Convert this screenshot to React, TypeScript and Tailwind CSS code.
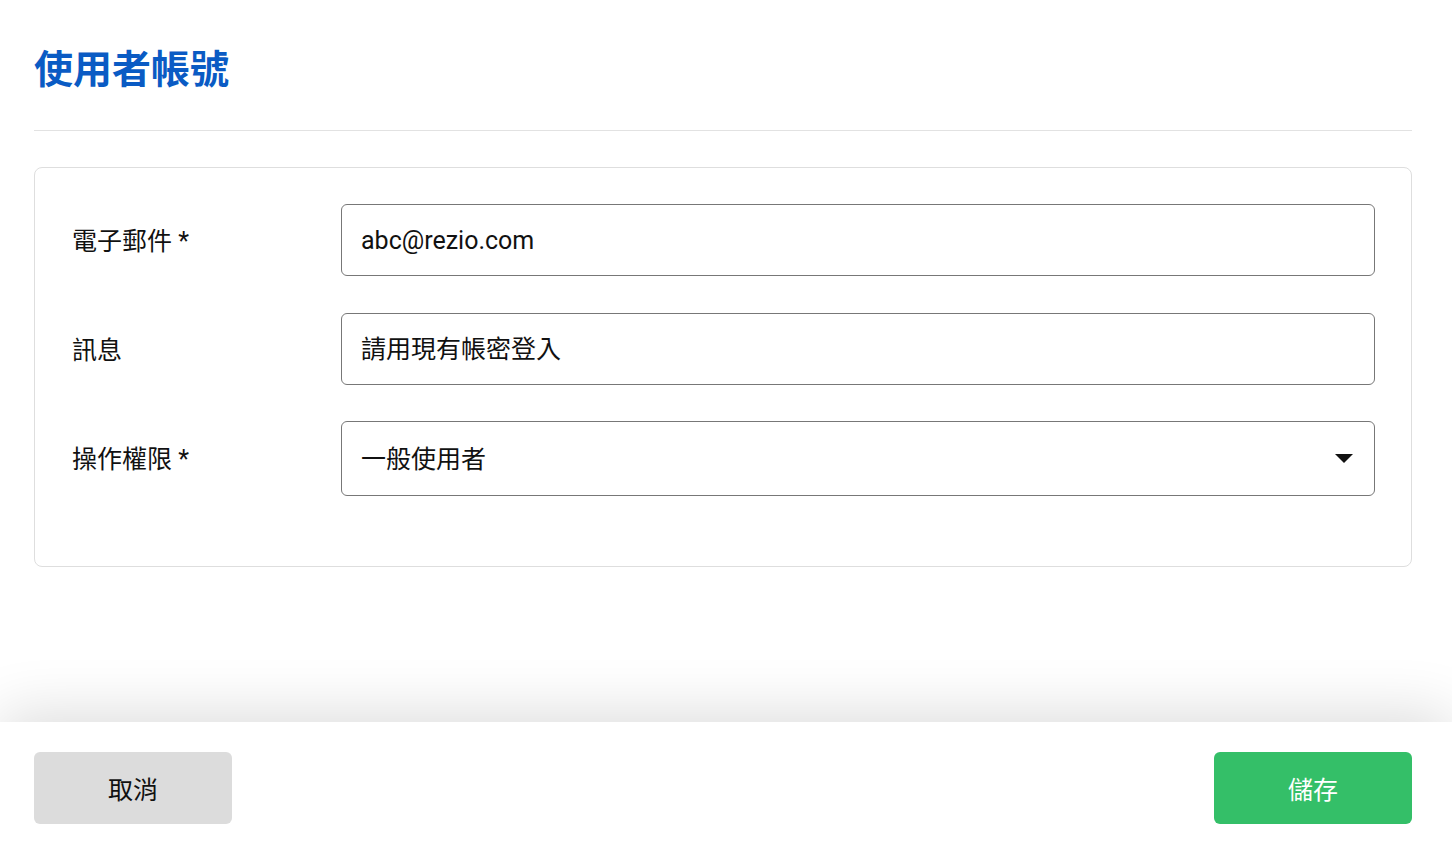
import React from 'react';

const FONT = 'font-[Roboto,"Noto_Sans_CJK_TC",sans-serif]';

interface FieldRowProps {
  label: string;
  required?: boolean;
  className?: string;
  children: React.ReactNode;
}

const FieldRow: React.FC<FieldRowProps> = ({ label, required, className = '', children }) => (
  <div className={`flex items-center ${className}`}>
    <div className="w-[269px] shrink-0 pt-[2px] text-[25px] leading-none text-[#111]">
      {label}
      {required && ' *'}
    </div>
    <div className="flex-1">{children}</div>
  </div>
);

const App: React.FC = () => {
  return (
    <div className={`${FONT} flex h-screen flex-col bg-white text-[#111]`}>
      <div className="flex-1 pl-[34px] pr-[40px]">
        <div className="flex h-[131px] items-start border-b border-[#e2e2e2] pt-[46px]">
          <h1 className="text-[39px] font-bold leading-[48px] text-[#0a5bc4]">使用者帳號</h1>
        </div>

        <div className="mt-[36px] rounded-lg border border-[#dedede] pb-[70px] pl-[37px] pr-[36px] pt-[36px]">
          <FieldRow label="電子郵件" required>
            <div className="flex h-[72px] items-center rounded-md border border-[#777] pl-[19px] pt-[2px] text-[25px]">
              abc@rezio.com
            </div>
          </FieldRow>
          <FieldRow label="訊息" className="mt-[37px]">
            <div className="flex h-[72px] items-center rounded-md border border-[#777] pl-[19px] pt-[2px] text-[25px]">
              請用現有帳密登入
            </div>
          </FieldRow>
          <FieldRow label="操作權限" required className="mt-[36px]">
            <div className="flex h-[75px] items-center justify-between rounded-md border border-[#777] pl-[19px] pr-[21px] text-[25px]">
              <span className="pt-[2px]">一般使用者</span>
              <svg width="18" height="9" viewBox="0 0 18 9">
                <polygon points="0,0 18,0 9,9" fill="#111" />
              </svg>
            </div>
          </FieldRow>
        </div>
      </div>

      <div className="relative flex h-[126px] shrink-0 items-start justify-between bg-white pl-[34px] pr-[40px] pt-[30px] shadow-[0_-8px_60px_rgba(0,0,0,0.14)]">
        <button className="flex h-[72px] w-[198px] items-center justify-center rounded-md bg-[#dcdcdc] pt-[5px] text-[25px] text-[#111]">
          取消
        </button>
        <button className="flex h-[72px] w-[198px] items-center justify-center rounded-md bg-[#34bf68] pt-[5px] text-[25px] text-white">
          儲存
        </button>
      </div>
    </div>
  );
};

export default App;
